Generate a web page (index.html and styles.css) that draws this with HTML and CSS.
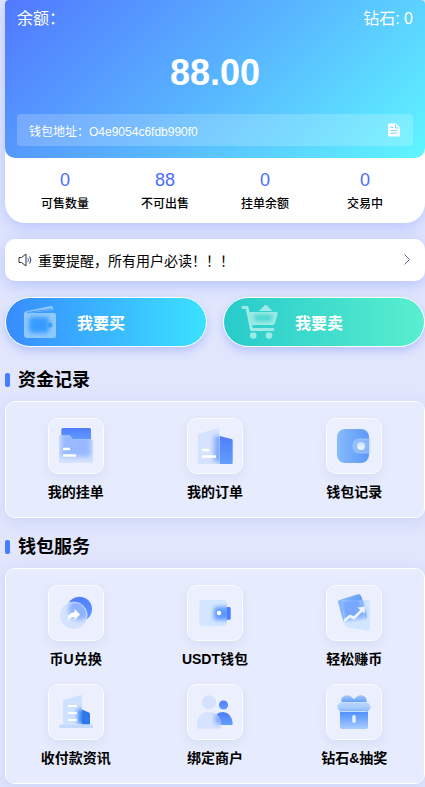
FILE: index.html
```html
<!DOCTYPE html>
<html lang="zh-CN">
<head>
  <meta charset="UTF-8">
  <meta name="viewport" content="width=device-width, initial-scale=1.0">
  <title>钱包</title>
  <link rel="stylesheet" href="styles.css">
</head>
<body>

  <!-- shared gradients and blur -->
  <svg class="defs" width="0" height="0" aria-hidden="true">
    <defs>
      <linearGradient id="blue" x1="0" y1="0" x2="0" y2="1">
        <stop offset="0" stop-color="#4f7dff"/>
        <stop offset="1" stop-color="#629fff"/>
      </linearGradient>
      <linearGradient id="sky" x1="0" y1="0" x2="1" y2="0">
        <stop offset="0" stop-color="#86bbfc"/>
        <stop offset="1" stop-color="#5c98f8"/>
      </linearGradient>
      <linearGradient id="gift" x1="0" y1="0" x2="0" y2="1">
        <stop offset="0" stop-color="#4a8bff"/>
        <stop offset="1" stop-color="#a9cdff"/>
      </linearGradient>
      <linearGradient id="bow" x1="0" y1="0" x2="0" y2="1">
        <stop offset="0" stop-color="#a5c8fd"/>
        <stop offset="1" stop-color="#5d9bfb"/>
      </linearGradient>
      <linearGradient id="lid" x1="0" y1="0" x2="0" y2="1">
        <stop offset="0" stop-color="#b9d6ff"/>
        <stop offset="0.6" stop-color="#a8cbff"/>
        <stop offset="1" stop-color="#7fb1ff"/>
      </linearGradient>
      <linearGradient id="pearl" x1="0" y1="0" x2="0" y2="1">
        <stop offset="0" stop-color="#c5dcff"/>
        <stop offset="1" stop-color="#f4f9ff"/>
      </linearGradient>
      <filter id="blur" x="-50%" y="-50%" width="200%" height="200%" color-interpolation-filters="sRGB">
        <feGaussianBlur stdDeviation="2"/>
      </filter>
    </defs>
  </svg>

  <div class="container">
    <div class="balance-card">
      <div class="balance">
        <div class="balance-top">
          <span>余额：</span>
          <span>钻石: 0</span>
        </div>
        <div class="amount">88.00</div>
        <div class="address">
          <span>钱包地址：O4e9054c6fdb990f0</span>
          <button class="copy" aria-label="复制">
            <svg width="14" height="14" viewBox="0 0 14 14">
              <path d="M2.500 0.500H9L13 4.500V12Q13 13.500 11.500 13.500H2.500Q1 13.500 1 12V2Q1 0.500 2.500 0.500z" fill="#fff"/>
              <path d="M8.500 1.500V5H12M3.500 4.500h3M3.500 7.500h7M3.500 10h7" fill="none" stroke="#84d6ff"/>
            </svg>
          </button>
        </div>
      </div>
      <div class="stats">
        <div class="stat"><b>0</b><span>可售数量</span></div>
        <div class="stat"><b>88</b><span>不可出售</span></div>
        <div class="stat"><b>0</b><span>挂单余额</span></div>
        <div class="stat"><b>0</b><span>交易中</span></div>
      </div>
    </div>

    <a class="notice" href="#">
      <svg width="14" height="14" viewBox="0 0 14 14" fill="none" stroke="#333">
        <path d="M1 4.500h2.500L8 1v12L3.500 9.500H1z"/>
        <path d="M9.800 5q1.400 2 0 4" stroke="#4a6dff"/>
        <path d="M11.600 3.500q2.600 3.500 0 7"/>
      </svg>
      <span>重要提醒，所有用户必读！！！</span>
      <svg width="8" height="14" viewBox="0 0 8 14" fill="none" stroke="#5c6480">
        <path d="M1.500 1.500L6.500 6.500l-5 5"/>
      </svg>
    </a>

    <div class="trade">
      <button class="buy">
        <svg width="38" height="36" viewBox="0 0 38 36">
          <path d="M1 10Q1 7.500 4 7L28 2Q30 1.700 30 3.500V6L5 9H31Q33 9 33 11V32Q33 34 31 34H4Q1 34 1 31z" fill="#8fc9ff"/>
          <path d="M4 8.500L29 5" stroke="#3d97ff"/>
          <rect x="6" y="13" width="20" height="16" rx="4" fill="#379cff" filter="url(#blur)"/>
          <circle cx="27" cy="21" r="2.500" fill="#3f9dfb"/>
        </svg>
        <span>我要买</span>
      </button>
      <button class="sell">
        <svg width="38" height="36" viewBox="0 0 38 36">
          <path d="M2 3.500H6L10.500 25.500H32" fill="none" stroke="#9eebe6" stroke-width="3" stroke-linecap="round" stroke-linejoin="round"/>
          <path d="M18 7L23.500 1.500Q24.700 0.500 26 1.500L31.500 7z" fill="#9eebe6"/>
          <path d="M8 8H35Q37 8 36.500 10L34 19.500Q33.500 21 32 21H11z" fill="#9eebe6"/>
          <path d="M13 11H32L30 17H14z" fill="#43d5d1" filter="url(#blur)"/>
          <circle cx="12.300" cy="31.500" r="3.300" fill="#9eebe6"/>
          <circle cx="28" cy="31.500" r="3.300" fill="#9eebe6"/>
        </svg>
        <span>我要卖</span>
      </button>
    </div>

    <h2>资金记录</h2>
    <div class="panel">
      <a class="item" href="#">
        <span class="tile">
          <svg viewBox="1 1 54 54">
            <clipPath id="c1"><path d="M11 18Q11 17 12 17H20Q21 17 22 18L25 21.300H44Q45 21.300 45 22.500V43.500Q45 44.700 44 44.700H12Q11 44.700 11 43.500z"/></clipPath>
            <path d="M13.300 21V11.500Q13.300 10 15 10H41.500Q43 10 43 11.500V23H25L21 19H13.300z" fill="url(#blue)"/>
            <g clip-path="url(#c1)">
              <rect x="10" y="16" width="36" height="30" fill="#d3e2ff"/>
              <rect x="13" y="14" width="30" height="25" fill="#98b9ff" filter="url(#blur)"/>
            </g>
            <path d="M15 31h7M15 37.500h13" stroke="#fff" stroke-width="2.600"/>
          </svg>
        </span>
        <span class="name">我的挂单</span>
      </a>
      <a class="item" href="#">
        <span class="tile">
          <svg viewBox="1 1 54 54">
            <clipPath id="c2"><path d="M10.700 17Q10.700 15.800 12 15.500L31 10.300Q32.500 10 32.500 11.500V46H12Q10.700 46 10.700 44.700z"/></clipPath>
            <path d="M32.500 18L44.500 21Q45.700 21.300 45.700 22.500V44.700Q45.700 46 44.500 46H32.500z" fill="url(#blue)"/>
            <g clip-path="url(#c2)">
              <rect x="10" y="9" width="23" height="38" fill="#d5e3ff"/>
              <rect x="27" y="18" width="12" height="26" fill="#85abff" filter="url(#blur)"/>
            </g>
            <path d="M15 32h7M15 38.500h14" stroke="#fff" stroke-width="2.600"/>
          </svg>
        </span>
        <span class="name">我的订单</span>
      </a>
      <a class="item" href="#">
        <span class="tile">
          <svg viewBox="1 1 54 54">
            <rect x="11" y="11" width="32" height="34" rx="8" fill="url(#sky)"/>
            <path d="M44 21H33Q27 21 27 28T33 35H44z" fill="#b5d3ff" fill-opacity="0.5" stroke="#b9d5ff" stroke-opacity="0.5"/>
            <circle cx="35" cy="28" r="4" fill="url(#pearl)"/>
          </svg>
        </span>
        <span class="name">钱包记录</span>
      </a>
    </div>

    <h2>钱包服务</h2>
    <div class="panel">
      <a class="item" href="#">
        <span class="tile">
          <svg viewBox="1 1 54 54">
            <clipPath id="c3"><circle cx="25.800" cy="30.300" r="13.500"/></clipPath>
            <circle cx="31.500" cy="24.200" r="12.500" fill="url(#blue)"/>
            <g clip-path="url(#c3)">
              <rect x="12" y="16" width="28" height="29" fill="#d5e3ff"/>
              <circle cx="31.500" cy="24.200" r="11" fill="#8fb2ff" filter="url(#blur)"/>
            </g>
            <circle cx="25.800" cy="30.300" r="13" fill="none" stroke="#cfdfff" stroke-opacity="0.7"/>
            <path d="M26.500 24L32 29.500L26.500 35V32Q22 31.500 19.500 36Q19.500 28 26.500 27z" fill="#fff"/>
          </svg>
        </span>
        <span class="name">币U兑换</span>
      </a>
      <a class="item" href="#">
        <span class="tile">
          <svg viewBox="1 1 54 54">
            <clipPath id="c4"><rect x="12.300" y="15" width="27.700" height="26" rx="4"/></clipPath>
            <path d="M40 22H42.500Q43.700 22 43.700 23.500V33.200Q43.700 34.700 42.500 34.700H40z" fill="#4d7dff"/>
            <g clip-path="url(#c4)">
              <rect x="12" y="15" width="28" height="26" fill="#d2e6ff"/>
              <rect x="27" y="22" width="17" height="13" rx="3" fill="#5e98ff" filter="url(#blur)"/>
            </g>
            <circle cx="32" cy="28" r="2.200" fill="#fff"/>
          </svg>
        </span>
        <span class="name">USDT钱包</span>
      </a>
      <a class="item" href="#">
        <span class="tile">
          <svg viewBox="1 1 54 54">
            <clipPath id="c5"><path d="M16 16.500Q16 15 17.500 15H42.500Q44 15 44 16.500V44.500Q44 46 42.500 45.800L21 42.500Q19 42 18.800 40z"/></clipPath>
            <path d="M12 17Q11.700 15.500 13.500 15L32 9.300Q34.500 8.700 35 11L41 32.500Q41.300 34 40 34.300L19 37Q17.500 37 17 35.500z" fill="url(#sky)"/>
            <g clip-path="url(#c5)">
              <rect x="15" y="14" width="30" height="33" fill="#cfe5ff" fill-opacity="0.9"/>
              <path d="M14 16L34 11L40 32L18 35z" fill="#78a8ff" filter="url(#blur)"/>
            </g>
            <path d="M35 12L40.500 32.500" fill="none" stroke="#6396fb" stroke-opacity="0.5" stroke-width="1.500"/>
            <path d="M18 36L24 31L28 33L37 24" fill="none" stroke="#edf5ff" stroke-width="2.600" stroke-linejoin="round"/>
            <path d="M31.500 22.500L39 21.500L38.500 28.500z" fill="#edf5ff"/>
          </svg>
        </span>
        <span class="name">轻松赚币</span>
      </a>
      <a class="item" href="#">
        <span class="tile">
          <svg viewBox="1 1 54 54">
            <clipPath id="c6"><path d="M15 17Q15 16 16 15.700L33 11Q34 10.700 34 12V40.500H15z"/></clipPath>
            <path d="M34 25.500L41 28.500Q42 29 42 30V40.500H34z" fill="#3077eb"/>
            <g clip-path="url(#c6)">
              <rect x="14" y="10" width="21" height="31" fill="#cee1ff"/>
              <path d="M30 24L42 29V40H30z" fill="#3c86f4" filter="url(#blur)"/>
            </g>
            <rect x="11.500" y="40.500" width="33.500" height="3.500" fill="#c4dafc"/>
            <path d="M20 22h9M20 29h9M20 36h9" stroke="#fff" stroke-width="2"/>
          </svg>
        </span>
        <span class="name">收付款资讯</span>
      </a>
      <a class="item" href="#">
        <span class="tile">
          <svg viewBox="1 1 54 54">
            <clipPath id="c7"><path d="M10 43.500V40Q11 28 22 28T34 40V43.500Q34 44.700 32.800 44.700H11.200Q10 44.700 10 43.500z"/></clipPath>
            <circle cx="36.500" cy="21" r="4.600" fill="url(#blue)"/>
            <path d="M29.500 30Q33 28 36 28Q45 29 45.700 39.500Q45.700 41 44.500 41H31z" fill="url(#blue)"/>
            <circle cx="22" cy="18.300" r="7" fill="#d4e2ff"/>
            <g clip-path="url(#c7)">
              <rect x="10" y="27" width="25" height="18" fill="#d5e3ff"/>
              <rect x="28" y="30" width="12" height="10" fill="#83a9ff" filter="url(#blur)"/>
            </g>
          </svg>
        </span>
        <span class="name">绑定商户</span>
      </a>
      <a class="item" href="#">
        <span class="tile">
          <svg viewBox="1 1 54 54">
            <path d="M16 19Q14 15 17.500 12.500Q21 10 25 12.500L28 15L31 12.500Q35 10 38.500 12.500Q42 15 40 19z" fill="url(#bow)"/>
            <path d="M14 27H42V43Q42 45 40 45H16Q14 45 14 43z" fill="url(#gift)"/>
            <rect x="11.500" y="18.500" width="33" height="9" rx="4.500" fill="url(#lid)" stroke="#c9e0ff"/>
            <rect x="26.300" y="31" width="3.400" height="8" rx="1.700" fill="#e9f3ff"/>
          </svg>
        </span>
        <span class="name">钻石&amp;抽奖</span>
      </a>
    </div>
  </div>

</body>
</html>
```

FILE: styles.css
```css
* {
  margin: 0;
  padding: 0;
  box-sizing: border-box;
}
body {
  font-family: "Liberation Sans", "Noto Sans CJK SC", sans-serif;
  background-color: #e1e6fd;
  color: #000;
  min-height: 100vh;
  overflow-x: hidden;
}
a {
  color: inherit;
  text-decoration: none;
}
button {
  border: none;
  background: none;
  font-family: inherit;
  cursor: pointer;
}
svg {
  display: block;
  flex-shrink: 0;
}
.defs {
  position: absolute;
}
.container {
  padding-left: 5px;
}
.balance-card {
  background-color: #fff;
  border-radius: 4px 4px 20px 20px;
  box-shadow: 0 4px 16px rgba(84, 116, 255, 0.3);
}
.balance {
  padding: 7px 12px 12px;
  border-radius: 4px 4px 10px 10px;
  background: linear-gradient(135deg, #5178ff 0%, #58b4ff 50%, #5ef6ff 100%);
  color: #fff;
}
.balance-top {
  display: flex;
  justify-content: space-between;
  font-size: 16px;
  line-height: 24px;
}
.amount {
  padding: 20px 0 19px;
  font-size: 36px;
  line-height: 44px;
  font-weight: bold;
  text-align: center;
}
.address {
  display: flex;
  justify-content: space-between;
  align-items: center;
  height: 32px;
  padding: 0 12px;
  border-radius: 4px;
  background-color: rgba(255, 255, 255, 0.2);
  font-size: 12px;
}
.stats {
  display: grid;
  grid-template-columns: repeat(4, 1fr);
  padding: 12px 10px 9px;
  text-align: center;
}
.stat b {
  display: block;
  color: #4a6dff;
  font-size: 18px;
  line-height: 20px;
  font-weight: normal;
}
.stat span {
  display: block;
  padding-top: 4px;
  font-size: 12px;
  line-height: 20px;
  font-weight: 500;
}
.notice {
  display: flex;
  align-items: center;
  gap: 6px;
  height: 42px;
  margin-top: 16px;
  padding: 0 14px 0 13px;
  border-radius: 10px;
  background-color: #fff;
  box-shadow: 0 4px 16px rgba(84, 116, 255, 0.3);
  font-size: 14px;
}
.notice span {
  flex: 1;
}
.trade {
  display: grid;
  grid-template-columns: 1fr 1fr;
  gap: 16px;
  margin: 16px 0 20px;
}
.trade button {
  display: flex;
  align-items: center;
  gap: 16px;
  height: 50px;
  padding: 0 17px;
  border: 1px solid #fff;
  border-radius: 25px;
  box-shadow: 0 4px 8px rgba(84, 116, 255, 0.3);
  color: #fff;
  font-size: 16px;
  font-weight: bold;
}
.trade .buy {
  background: linear-gradient(90deg, #388bff, #3be2ff) border-box;
}
.trade .sell {
  background: linear-gradient(90deg, #28cbcb, #59efcf) border-box;
}
h2 {
  display: flex;
  align-items: center;
  gap: 8px;
  margin: 16px 0 8px;
  font-size: 18px;
  line-height: 26px;
}
h2::before {
  content: "";
  width: 5px;
  height: 14px;
  border-radius: 2px;
  background-color: #457dff;
}
.panel {
  display: grid;
  grid-template-columns: repeat(3, 1fr);
  padding-top: 16px;
  border: 1px solid #fff;
  border-radius: 10px;
  background-color: #e6ebfd;
  box-shadow: 0 4px 16px rgba(84, 116, 200, 0.15);
}
.item {
  display: flex;
  flex-direction: column;
  align-items: center;
  gap: 8px;
  padding-bottom: 15px;
}
.tile {
  width: 56px;
  height: 56px;
  border: 1px solid #fbfcff;
  border-radius: 10px;
  background-color: #ecf0fe;
  box-shadow: 0 4px 10px rgba(84, 116, 200, 0.1);
}
.name {
  font-size: 14px;
  line-height: 20px;
  font-weight: bold;
}
```
